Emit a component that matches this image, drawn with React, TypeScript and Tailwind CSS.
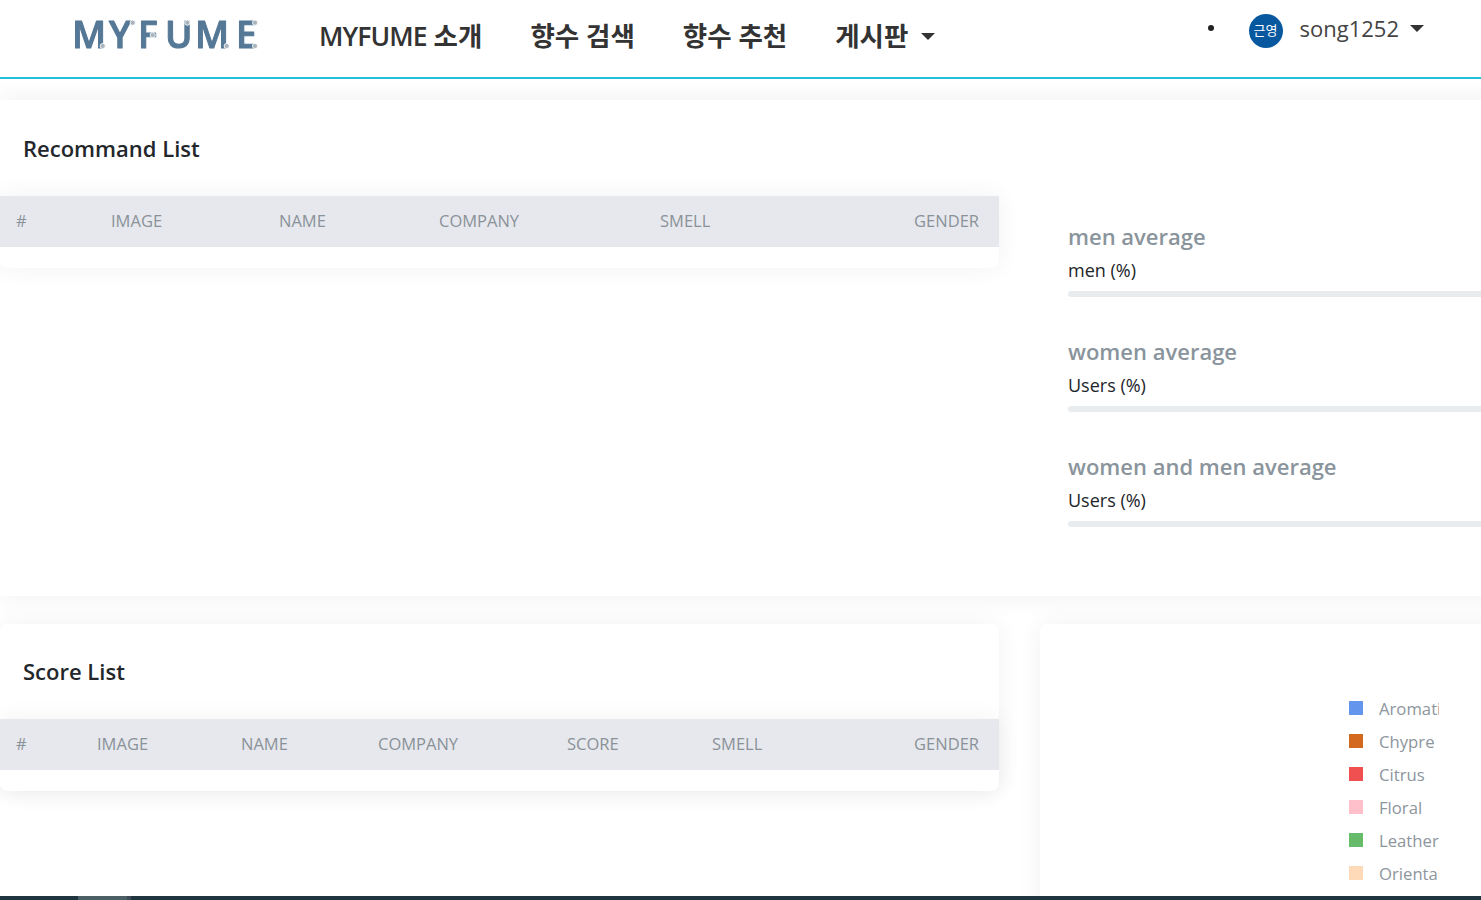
import React from "react";

const FONT = "font-['Open_Sans','Noto_Sans_CJK_KR',sans-serif]";

function Caret({ className }: { className: string }) {
  return <span className={`inline-block h-0 w-0 border-x-[7px] border-t-[7px] border-x-transparent border-t-[#333] ${className}`} />;
}

function Logo() {
  const dots: [number, number][] = [
    [27.7, 37], [57.7, 13.7], [77.7, 26], [112.3, 13.7], [151.7, 37], [180, 13.7], [180, 37],
  ];
  return (
    <svg width="190" height="50" viewBox="0 0 190 50" className="blur-[0.6px]">
      <text x="-3 34 63 90 120 161" y="39" fontFamily="Open Sans" fontWeight="600" fontSize="37" fill="#557896" stroke="#557896" strokeWidth="1" strokeLinejoin="round">MYFUME</text>
      {dots.map(([x, y], i) => (
        <circle key={i} cx={x} cy={y} r="2.6" fill="#a9b4be" stroke="#fff" strokeWidth="0.8" />
      ))}
    </svg>
  );
}

function Nav() {
  return (
    <nav className="flex h-[79px] shrink-0 items-start border-b-2 border-[#22bfd8] bg-white">
      <div className="ml-[75px] mt-[9px] w-[244px]"><Logo /></div>
      <div className="mt-[18px] flex items-center gap-[48px] text-[26.5px] leading-[36px] font-semibold text-[#333]">
        <span><span className="tracking-[-0.9px]">MYFUME</span> 소개</span>
        <span>향수 검색</span>
        <span>향수 추천</span>
        <span className="flex items-center">게시판<Caret className="ml-[13px]" /></span>
      </div>
      <div className="ml-auto mt-[14px] flex items-start pr-[57px]">
        <span className="mt-[11px] mr-[35px] h-[6px] w-[6px] rounded-full bg-[#222]" />
        <span className="flex h-[34px] w-[34px] items-center justify-center rounded-full bg-[#08589f] text-[13px] text-white">근영</span>
        <span className="-mt-[1px] ml-[17px] text-[22px] leading-[30px] text-[#444]">song1252</span>
        <Caret className="mt-[11px] ml-[11px]" />
      </div>
    </nav>
  );
}

function DataTable({ cols, labels }: { cols: string; labels: string[] }) {
  return (
    <div className="w-[999px] rounded-b-[8px] bg-white pb-[21px] shadow-[0_0_24px_rgba(0,0,0,0.06)]">
      <div className={`grid h-[51px] items-center bg-[#e6e8ed] pb-[1px] pl-[16px] pr-[20px] text-[16.5px] text-[#8a9299] ${cols}`}>
        {labels.map((l, i) => (
          <span key={l} className={i === labels.length - 1 ? "text-right" : ""}>{l}</span>
        ))}
      </div>
    </div>
  );
}

function Stat({ title, sub }: { title: string; sub: string }) {
  return (
    <div className="h-[115px]">
      <h4 className="text-[22px] leading-[30px] font-semibold text-[#8a949c]">{title}</h4>
      <p className="mt-[7px] text-[18px] leading-[24px] text-[#212529]">{sub}</p>
      <div className="mt-[9px] h-[6px] w-[500px] rounded-[3px] bg-[#e9ecef]" />
    </div>
  );
}

const legend = [
  ["Aromatic", "bg-[#6495ed]"],
  ["Chypre", "bg-[#d2691e]"],
  ["Citrus", "bg-[#f05050]"],
  ["Floral", "bg-[#ffc0cb]"],
  ["Leather", "bg-[#66bb6a]"],
  ["Oriental", "bg-[#ffdab9]"],
];

export default function App() {
  return (
    <div className={`flex h-[900px] w-[1481px] flex-col overflow-hidden bg-white ${FONT}`}>
      <Nav />
      <main className="min-h-0 flex-1 overflow-hidden pt-[21px]">
        <section className="flex h-[496px] w-[1600px] bg-white shadow-[0_0_24px_rgba(0,0,0,0.07)]">
          <div className="w-[999px] shrink-0">
            <h3 className="pl-[23px] pt-[32px] text-[22px] leading-[32px] font-semibold text-[#23272b]">Recommand List</h3>
            <div className="mt-[32px]">
              <DataTable cols="grid-cols-[95px_168px_160px_221px_1fr_120px]" labels={["#", "IMAGE", "NAME", "COMPANY", "SMELL", "GENDER"]} />
            </div>
          </div>
          <div className="ml-[69px] pt-[121px]">
            <Stat title="men average" sub="men (%)" />
            <Stat title="women average" sub="Users (%)" />
            <Stat title="women and men average" sub="Users (%)" />
          </div>
        </section>
        <section className="mt-[28px] flex w-[1600px] items-start">
          <div className="w-[999px] shrink-0 rounded-[8px] bg-white shadow-[0_0_24px_rgba(0,0,0,0.06)]">
            <h3 className="pl-[23px] pt-[31px] text-[22px] leading-[32px] font-semibold text-[#23272b]">Score List</h3>
            <div className="mt-[32px]">
              <DataTable cols="grid-cols-[81px_144px_137px_189px_145px_1fr_120px]" labels={["#", "IMAGE", "NAME", "COMPANY", "SCORE", "SMELL", "GENDER"]} />
            </div>
          </div>
          <div className="ml-[41px] h-[400px] w-[500px] rounded-[8px] bg-white pl-[309px] pt-[68px] shadow-[0_0_24px_rgba(0,0,0,0.06)]">
            <ul className="flex flex-col">
              {legend.map(([name, color]) => (
                <li key={name} className="flex h-[33px] items-start">
                  <span className={`mt-[9px] h-[14px] w-[14px] shrink-0 ${color}`} />
                  <span className="ml-[16px] w-[60px] overflow-hidden text-[16.7px] leading-[34px] whitespace-nowrap text-[#8d959d]">{name}</span>
                </li>
              ))}
            </ul>
          </div>
        </section>
      </main>
      <div className="flex h-[4px] shrink-0 bg-[#1f3540]">
        <span className="ml-[78px] w-[49px] bg-[#4d5f66]" />
        <span className="w-[4px] bg-[#3f4a55]" />
      </div>
    </div>
  );
}
